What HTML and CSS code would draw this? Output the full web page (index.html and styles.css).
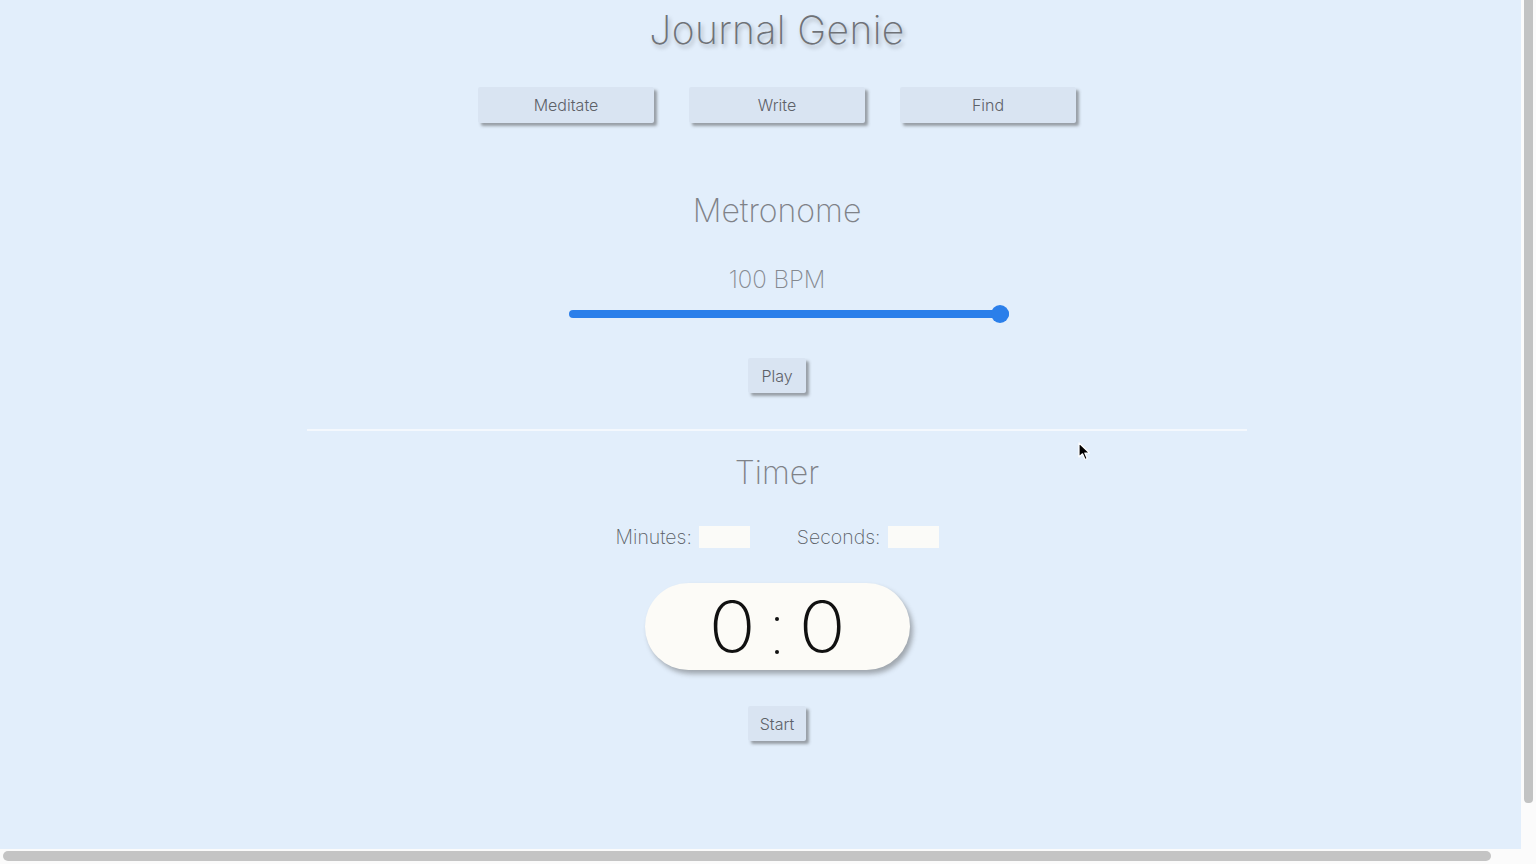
FILE: index.html
```html
<!DOCTYPE html>
<html lang="en">
<head>
<meta charset="utf-8">
<title>Journal Genie</title>
<link rel="stylesheet" href="styles.css">
</head>
<body>
<div class="screen">
  <main class="viewport">
    <div class="content">
      <h1 class="title">Journal Genie</h1>
      <nav class="nav">
        <button class="nav-btn">Meditate</button>
        <button class="nav-btn">Write</button>
        <button class="nav-btn">Find</button>
      </nav>

      <section class="metronome">
        <h2 class="heading">Metronome</h2>
        <div class="bpm">100 BPM</div>
        <input class="slider" type="range" min="40" max="100" value="100">
        <button class="small-btn play">Play</button>
      </section>

      <hr class="divider">

      <section class="timer">
        <h2 class="heading timer-heading">Timer</h2>
        <div class="fields">
          <label class="field">Minutes: <input class="num" type="text"></label>
          <label class="field">Seconds: <input class="num" type="text"></label>
        </div>
        <div class="clock">
          <span class="digit">0</span>
          <span class="colon"><i></i><i></i></span>
          <span class="digit">0</span>
        </div>
        <button class="small-btn start">Start</button>
      </section>
    </div>
    <svg class="cursor" width="14" height="20" viewBox="0 0 14 20">
      <path d="M1 1 L1 15 L4.5 11.8 L7 17.5 L9.2 16.5 L6.8 11 L11.5 11 Z" fill="#000" stroke="#fff" stroke-width="1.2" stroke-linejoin="round"/>
    </svg>
  </main>
  <div class="vbar"><div class="vthumb"></div></div>
  <div class="hbar"><div class="hthumb"></div></div>
  <div class="corner"></div>
</div>
</body>
</html>
```

FILE: styles.css
```css
* { box-sizing: border-box; }

html, body {
  margin: 0;
  padding: 0;
  width: 1536px;
  height: 864px;
  overflow: hidden;
  background: #fbfbfb;
}

.screen {
  display: grid;
  grid-template-columns: 1521px 15px;
  grid-template-rows: 849px 15px;
  width: 1536px;
  height: 864px;
}

.viewport {
  position: relative;
  overflow: hidden;
  background: #e2eefb;
  font-family: "Inter", "Lato", sans-serif;
  font-weight: 250;
}

.content {
  width: 1554px;
  display: flex;
  flex-direction: column;
  align-items: center;
}

.title {
  margin: 6px 0 0;
  font-size: 39px;
  line-height: 48px;
  font-weight: 250;
  color: #6f7277;
  letter-spacing: 0.4px;
  text-shadow: 2px 3px 4px rgba(0, 0, 0, 0.28);
}

.nav {
  display: flex;
  gap: 35px;
  margin-top: 33px;
}

.nav-btn {
  width: 176px;
  height: 36px;
  border: none;
  border-radius: 2px;
  background: #d9e4f2;
  color: #5d6168;
  font-family: inherit;
  font-weight: 260;
  font-size: 16px;
  box-shadow: 3px 3px 3px rgba(60, 60, 60, 0.45);
  padding: 0;
}

.metronome {
  display: flex;
  flex-direction: column;
  align-items: center;
  margin-top: 68px;
}

.heading {
  margin: 0;
  font-size: 32px;
  line-height: 40px;
  font-weight: 250;
  color: #7f8288;
}

.bpm {
  margin-top: 34px;
  font-size: 24px;
  line-height: 30px;
  font-weight: 250;
  color: #858990;
}

.slider {
  -webkit-appearance: none;
  appearance: none;
  width: 440px;
  height: 18px;
  margin: 10px 0 0 24px;
  background: transparent;
}

.slider::-webkit-slider-runnable-track {
  height: 8px;
  border-radius: 4px;
  background: #2b7fea;
}

.slider::-webkit-slider-thumb {
  -webkit-appearance: none;
  width: 18px;
  height: 18px;
  margin-top: -5px;
  border-radius: 50%;
  background: #2b7fea;
  border: none;
}

.small-btn {
  width: 58px;
  height: 35px;
  border: none;
  border-radius: 2px;
  background: #d9e4f2;
  color: #5d6168;
  font-family: inherit;
  font-weight: 260;
  font-size: 16px;
  box-shadow: 3px 3px 3px rgba(60, 60, 60, 0.45);
  padding: 0;
}

.play { margin-top: 35px; }

.divider {
  width: 940px;
  height: 2px;
  border: none;
  background: #f4f8fd;
  margin: 36px 0 0;
}

.timer {
  display: flex;
  flex-direction: column;
  align-items: center;
  margin-top: 22px;
}

.fields {
  display: flex;
  gap: 47px;
  margin-top: 32px;
}

.field {
  display: flex;
  align-items: center;
  gap: 7px;
  font-size: 19.5px;
  font-weight: 250;
  color: #5a5e66;
}

.num {
  width: 51px;
  height: 22px;
  border: none;
  background: #fbfbf8;
  padding: 0;
}

.clock {
  display: flex;
  align-items: center;
  justify-content: center;
  gap: 22px;
  width: 265px;
  height: 87px;
  margin-top: 34px;
  border-radius: 44px;
  background: #fcfbf7;
  box-shadow: 3px 4px 5px rgba(60, 60, 60, 0.4);
}

.digit {
  display: inline-block;
  font-size: 70px;
  line-height: 70px;
  font-weight: 150;
  color: #111;
  transform: scaleX(1.12);
}

.colon {
  display: flex;
  flex-direction: column;
  justify-content: space-between;
  height: 37px;
  margin-top: 18px;
}

.colon i {
  width: 4px;
  height: 4px;
  border-radius: 50%;
  background: #111;
}

.start { margin-top: 36px; }

.cursor {
  position: absolute;
  left: 1078px;
  top: 442px;
}

.vbar {
  background: #fbfbfb;
  padding: 0 3px 0 3px;
}

.vthumb {
  width: 9px;
  height: 803px;
  border-radius: 0 0 4px 4px;
  background: #c2c3c3;
}

.hbar {
  background: #fbfbfb;
  padding: 2px 0 0 3px;
}

.hthumb {
  width: 1488px;
  height: 10px;
  border-radius: 5px;
  background: #c4c4c4;
}

.corner { background: #fbfbfb; }
```
